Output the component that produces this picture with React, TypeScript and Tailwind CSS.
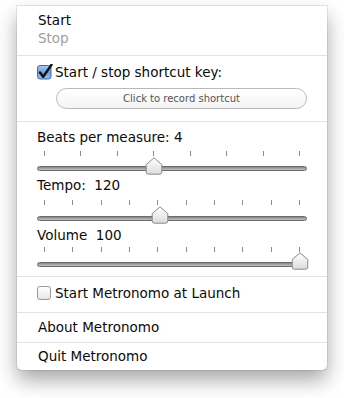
import React from "react";

const font = { fontFamily: '"DejaVu Sans", "Liberation Sans", sans-serif' };

function Thumb() {
  return (
    <svg width="18" height="18" viewBox="0 0 18 18">
      <defs>
        <linearGradient id="tg" x1="0" y1="0" x2="0" y2="1">
          <stop offset="0" stopColor="#ffffff" />
          <stop offset="1" stopColor="#dcdcdc" />
        </linearGradient>
      </defs>
      <path
        d="M9 0.8 L16.8 7.6 L16.8 15 Q16.8 17.2 14.6 17.2 L3.4 17.2 Q1.2 17.2 1.2 15 L1.2 7.6 Z"
        fill="url(#tg)"
        stroke="#8a8a8a"
        strokeWidth="1"
      />
    </svg>
  );
}

function Slider({
  ticks,
  thumbX,
  tickTop,
  trackCenter,
  height,
}: {
  ticks: number;
  thumbX: number;
  tickTop: number;
  trackCenter: number;
  height: number;
}) {
  return (
    <div className="relative mx-[20px]" style={{ height }}>
      <div className="absolute left-[7px] right-[7px] flex justify-between" style={{ top: tickTop }}>
        {Array.from({ length: ticks }).map((_, i) => (
          <div key={i} className="w-px h-[5px] bg-[#8c8c8c]" />
        ))}
      </div>
      <div
        className="absolute left-0 right-0 h-[5px] rounded-full border border-[#6c6c6c] bg-gradient-to-b from-[#858585] to-[#c4c4c4]"
        style={{ top: trackCenter - 2.5 }}
      />
      <div className="absolute" style={{ left: thumbX - 9, top: trackCenter - 12 }}>
        <Thumb />
      </div>
    </div>
  );
}

function Sep() {
  return <div className="h-px bg-[#e2e2e2]" />;
}

export default function App() {
  return (
    <div className="w-[344px] h-[398px] bg-white pt-[6px] pl-[17px]" style={font}>
      <div className="w-[310px] bg-white rounded-b-[5px] shadow-[0_10px_20px_rgba(0,0,0,0.35),0_0_0_1px_rgba(0,0,0,0.08)] text-[13.5px] text-[#0a0a0a]">
        <div className="pt-[5px] pb-[8px] pl-[21px]">
          <div className="h-[18px] leading-[18px]">Start</div>
          <div className="h-[18px] leading-[18px] text-[#a0a0a0]">Stop</div>
        </div>
        <Sep />
        <div className="pt-[7px] pb-[12px]">
          <div className="h-[18px] leading-[18px] flex items-center pl-[20px]">
            <svg width="18" height="16" viewBox="0 0 18 16" className="shrink-0">
              <defs>
                <linearGradient id="cb" x1="0" y1="0" x2="0" y2="1">
                  <stop offset="0" stopColor="#a9c9f2" />
                  <stop offset="0.5" stopColor="#6ea2e6" />
                  <stop offset="1" stopColor="#8fbdf3" />
                </linearGradient>
              </defs>
              <rect x="0.5" y="1.5" width="13.5" height="13.5" rx="2.5" fill="url(#cb)" stroke="#4a6a9a" />
              <path d="M3 8.5 L6.2 12.8 L14.5 0.8" fill="none" stroke="#111" strokeWidth="2.4" strokeLinejoin="round" strokeLinecap="round" />
            </svg>
            <span>Start / stop shortcut key:</span>
          </div>
          <div className="mt-[7px] ml-[39px] mr-[20px] h-[21px] rounded-full border border-[#b9b9b9] bg-gradient-to-b from-white to-[#f4f4f4] flex items-center justify-center text-[10px] text-[#555]">
            Click to record shortcut
          </div>
        </div>
        <Sep />
        <div className="pt-[6px]">
          <div className="h-[18px] leading-[18px] pl-[20px]">Beats per measure: 4</div>
          <Slider ticks={8} thumbX={117} tickTop={5} trackCenter={22.5} height={30} />
          <div className="h-[18px] leading-[18px] pl-[20px]">Tempo:&nbsp; 120</div>
          <Slider ticks={10} thumbX={123} tickTop={6} trackCenter={24} height={32} />
          <div className="h-[18px] leading-[18px] pl-[20px]">Volume&nbsp; 100</div>
          <Slider ticks={10} thumbX={263} tickTop={3} trackCenter={20} height={32} />
        </div>
        <Sep />
        <div className="pt-[7px] pb-[10px]">
          <div className="h-[18px] leading-[18px] flex items-center pl-[20px]">
            <div className="w-[14px] h-[14px] rounded-[3px] border border-[#9a9a9a] bg-gradient-to-b from-white to-[#e6e6e6] mr-[4px] shrink-0" />
            <span>Start Metronomo at Launch</span>
          </div>
        </div>
        <Sep />
        <div className="pt-[5px] pb-[6px] pl-[21px]">
          <div className="h-[18px] leading-[18px]">About Metronomo</div>
        </div>
        <Sep />
        <div className="pt-[4px] pb-[5px] pl-[21px]">
          <div className="h-[18px] leading-[18px]">Quit Metronomo</div>
        </div>
      </div>
    </div>
  );
}
